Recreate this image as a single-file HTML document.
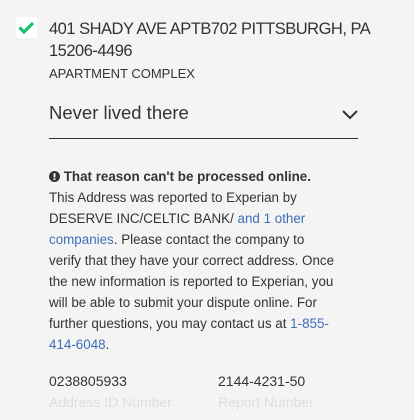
<!DOCTYPE html>
<html><head><style>
body{margin:0;background:#f4f4f4;font-family:"Liberation Sans",Arial,sans-serif;color:#333;width:414px;height:420px;overflow:hidden;position:relative}
.a{position:absolute;white-space:nowrap}
.cb{position:absolute;left:16px;top:17px;width:21px;height:21px;background:#fff;border-radius:2px}
.t{left:49px;font-size:13.4px;line-height:21px}
.l{color:#3d6fb8}
</style></head><body>
<div class="cb"><svg width="21" height="21" viewBox="0 0 21 21"><path d="M3.5 10.5 L8 15 L17 6" stroke="#1bbf6e" stroke-width="3.2" fill="none"/></svg></div>
<div class="a" style="left:49px;top:18px;font-size:16.5px;line-height:22px;letter-spacing:-0.5px">401 SHADY AVE APTB702 PITTSBURGH, PA<br>15206-4496</div>
<div class="a" style="left:49px;top:66px;font-size:13px;line-height:16px">APARTMENT COMPLEX</div>
<div class="a" style="left:49px;top:102px;font-size:18.5px;line-height:22px">Never lived there</div>
<svg class="a" style="left:341px;top:108px" width="18" height="12" viewBox="0 0 18 12"><path d="M2 3 L9 10 L16 3" stroke="#333" stroke-width="2" fill="none"/></svg>
<div class="a" style="left:49px;top:138px;width:309px;height:1px;background:#333"></div>
<div class="a t" style="top:166px;font-weight:bold"><svg width="11" height="11" viewBox="0 0 12 12" style="vertical-align:-1px"><circle cx="6" cy="6" r="6" fill="#333"/><rect x="5" y="2.5" width="2" height="4.5" fill="#fff"/><rect x="5" y="8" width="2" height="1.8" fill="#fff"/></svg> That reason can't be processed online.</div>
<div class="a t" style="top:187px">This Address was reported to Experian by<br>DESERVE INC/CELTIC BANK/ <span class="l">and 1 other</span><br><span class="l">companies</span>. Please contact the company to<br>verify that they have your correct address. Once<br>the new information is reported to Experian, you<br>will be able to submit your dispute online. For<br>further questions, you may contact us at <span class="l">1-855-</span><br><span class="l">414-6048</span>.</div>
<div class="a t" style="top:371px;font-size:14px">0238805933</div>
<div class="a t" style="top:392px;color:#ddd;font-size:14px">Address ID Number</div>
<div class="a" style="left:218px;top:371px;font-size:14px;line-height:21px">2144-4231-50</div>
<div class="a" style="left:218px;top:392px;font-size:14px;line-height:21px;color:#ddd">Report Number</div>
</body></html>
